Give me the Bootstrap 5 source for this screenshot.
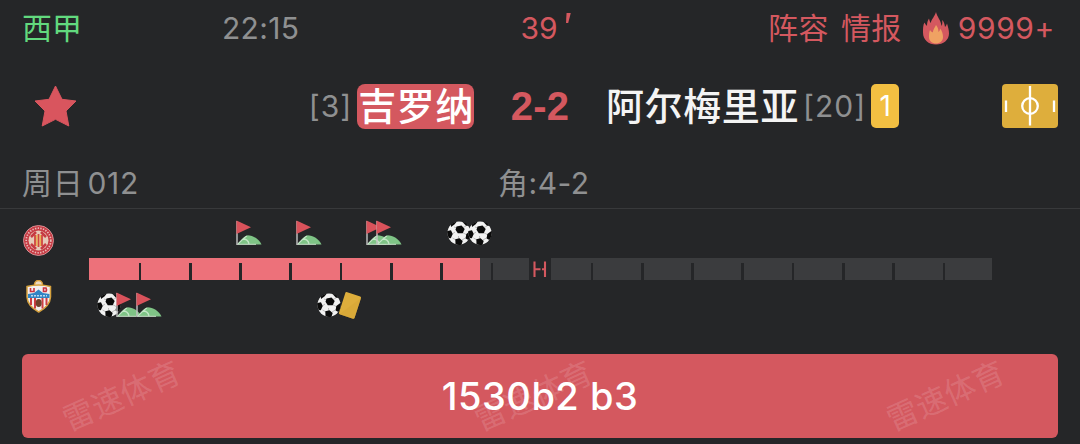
<!DOCTYPE html>
<html lang="zh-CN">
<head>
  <meta charset="UTF-8" />
  <meta name="viewport" content="width=device-width, initial-scale=1.0" />
  <title>吉罗纳 2-2 阿尔梅里亚</title>
  <link rel="stylesheet" href="https://cdn.jsdelivr.net/npm/bootstrap@5.3.3/dist/css/bootstrap.min.css" />
  <style>
    :root {
      --rojo: #d4585f;
      --gris: #8f9091;
      --fondo: #252628;
    }
    body {
      font-family: Inter, "Noto Sans CJK SC", sans-serif;
      font-size: 30px;
      font-weight: 370;
      line-height: 1;
      color: var(--gris);
      background-color: var(--fondo);
      overflow: hidden;
    }
    .match { width: 1080px; height: 444px; }
    .rojo { color: var(--rojo); }

    /* top line: league, kickoff, minute, links */
    .info-line { height: 56px; padding: 0 25px 0 22px; }
    .league { width: 200px; color: #62d97e; }
    .kickoff { width: 298.5px; letter-spacing: .3px; }
    .links { letter-spacing: .4px; }
    .heat { letter-spacing: .6px; margin-left: 9px; }
    .gap-links { margin-left: 12px; }
    .flame { margin-left: 21px; }

    /* teams and score */
    .teams-line { height: 100px; padding: 0 22px 0 34px; }
    .home-side { width: 397px; }
    .rank { letter-spacing: 1px; }
    .team-name { font-size: 38px; font-weight: 500; color: #f4f4f4; letter-spacing: .6px; }
    .home-name { height: 45px; border-radius: 8px; background: var(--rojo); color: #fff; padding: 0 0 0 1px; margin-left: 5px; }
    .score { width: 132px; font: bold 40px "Liberation Sans", sans-serif; letter-spacing: .3px; }
    .yellow-count { width: 28px; height: 44px; border-radius: 5px; background: #f2bf42; color: #fff; font-size: 28px; font-weight: 400; margin-left: 5px; }

    .extra-line { height: 53px; padding: 2px 22px 0; border-bottom: 1px solid #38393b; }
    .match-no { width: 476px; letter-spacing: .7px; }
    .corners { letter-spacing: .5px; }

    /* timeline */
    .timeline { height: 145px; }
    .crests { width: 88.5px; padding: 16px 0 0 23px; }
    .track { width: 903px; }
    .events { position: relative; height: 49px; }
    .events svg { position: absolute; }
    .half { position: relative; width: 440px; height: 22px; background: #3b3c3e; }
    .half.second { width: 441px; }
    .elapsed { height: 100%; background: #ed717a; }
    .half::after {
      content: "";
      position: absolute;
      inset: 5px 0 0 0;
      background: repeating-linear-gradient(90deg, transparent 0 47.6px, var(--fondo) 47.6px 50.3px);
      background-position: 2px 0;
      background-repeat: no-repeat;
    }
    .half.second::after { background-position: -8px 0; background-size: 460px 100%; }

    .tip-btn {
      --bs-btn-bg: #d4585f;
      --bs-btn-color: #fff;
      --bs-btn-hover-bg: #c94f56;
      --bs-btn-hover-color: #fff;
      position: relative;
      width: 1036px;
      height: 84px;
      border: 0;
      border-radius: 6px;
      font-size: 38px;
      font-weight: 480;
      letter-spacing: .5px;
      line-height: 85px;
      padding: 0;
    }
    .wm {
      position: absolute;
      top: 26px;
      font-size: 31px;
      font-weight: 400;
      letter-spacing: .3px;
      line-height: 31px;
      color: rgba(255, 255, 255, .14);
      transform: rotate(-24deg);
    }
  </style>
</head>
<body>

  <svg class="d-none">
    <symbol id="ic-flag" viewBox="0 0 26 26">
      <path d="M2 24.5C4 21 7 17 11.500 15.200C17 15.200 23 19 25.500 24.500Z" fill="#7fc486" />
      <path d="M2 24C6 20 8 17.500 11 16M7 19q5 0 6 5" fill="none" stroke="#c5e6c8" stroke-width="1.300" />
      <path d="M1 24.300H20" stroke="#c8ddc9" stroke-width="1" />
      <path d="M1 1V25" stroke="#c6c6c6" stroke-width="1.400" />
      <path d="M.5 .5L15 7.200L.5 14Z" fill="#d9525b" />
    </symbol>
    <symbol id="ic-ball" viewBox="0 0 24 24">
      <circle cx="12" cy="12" r="11.500" fill="#f2f2f2" />
      <path d="M13 8L19 5M13 8L7 6M15.500 11.500L20 14M11.500 15L12 20M8 11L4 14M5.500 17L9 19M15 19L20 16" stroke="#999" stroke-width=".6" fill="none" />
      <path d="M9.500 5.500L14.500 4.500L17.700 8L15.700 12.300L10.800 12.200L8.500 8.800Z" fill="#0b0b0b" />
      <path d="M.3 10L4 9.300L5.700 13L3.800 17.300L1.700 17A12 12 0 0 1 .3 10Z" fill="#0b0b0b" />
      <path d="M8.300 18.300L12.500 17.200L15.700 20L14.500 23.700A12 12 0 0 1 8.500 23.300Z" fill="#0b0b0b" />
      <path d="M19.300 13L23.700 9.800A12 12 0 0 1 21.300 19L18.600 17.500Z" fill="#0b0b0b" />
      <path d="M3.800 3.500A12 12 0 0 1 9.800 .4L7.700 3.200L4 6Z" fill="#0b0b0b" />
      <path d="M15 .6A12 12 0 0 1 21.500 4.800L19 4.800Z" fill="#0b0b0b" />
    </symbol>
    <symbol id="ic-card" viewBox="0 0 24 29">
      <path d="M8.500 1L22.300 5.500Q23.300 6 23 7L16.500 27Q16 28 15 27.700L1.600 23.200Q.7 22.800 1 21.800L7.400 1.800Q7.700 .8 8.500 1Z" fill="#deae3c" />
      <path d="M23 7L16.500 27Q16 28 15 27.700L1.600 23.200Z" fill="#d6a535" opacity=".6" />
    </symbol>
  </svg>

  <div class="match d-flex flex-column">
    <div class="info-line d-flex align-items-center">
      <div class="league">西甲</div>
      <div class="kickoff">22:15</div>
      <div class="rojo d-flex">39<svg width="15" height="30" viewBox="0 0 15 30"><path d="M8.600 -1H13L10.200 10H8Z" fill="#d4585f" /></svg></div>
      <div class="links rojo ms-auto d-flex align-items-center">
        <span>阵容</span>
        <span class="gap-links">情报</span>
        <svg class="flame" width="26" height="33" viewBox="0 0 26 33">
          <path d="M13 0C14 5 18 8 18.500 14C19.500 12.500 19.500 10 19 8C21 9.500 21.500 12 22 15C23 14 23.500 13 24 11.500C25 15 26 18 26 21.500C26 28 20.500 32.500 13 32.500S0 28 0 20.500C0 16.500 0 13 1.500 10.500C2.500 12.500 3.200 13 4 14C4 11 4.500 9 6 6.500C6.500 8.500 7 10 7.800 11C8.500 7 11.500 5 13 0Z" fill="#d4585f" />
          <path d="M13 13C14.500 15 15.500 16.500 15.500 20C16.500 19 17 18 17 16.500C19 18.500 20 22 20 25C20 29 17 31.500 13 31.500S6 29 6 25C6 22.500 6 20.500 7 18C8 19.500 9 20 9.800 20.500C10 17.500 12 15.500 13 13Z" fill="#efa263" />
        </svg>
        <span class="heat">9999+</span>
      </div>
    </div>

    <div class="teams-line d-flex align-items-center">
      <svg width="43" height="42" viewBox="0 0 43 42"><path d="M21.500 1L28 14.300L42 16L32 26L34.800 41L21.500 34.300L8.200 41L11 26L1 16L15 14.300Z" fill="#d9555e" stroke="#d9555e" stroke-linejoin="round" /></svg>
      <div class="home-side d-flex align-items-center justify-content-end">
        <span class="rank">[3]</span>
        <span class="team-name home-name d-flex align-items-center">吉罗纳</span>
      </div>
      <div class="score rojo text-center">2-2</div>
      <span class="team-name">阿尔梅里亚</span>
      <span class="rank ms-1">[20]</span>
      <span class="yellow-count d-flex align-items-center justify-content-center">1</span>
      <svg class="ms-auto" width="56" height="44" viewBox="0 0 56 44">
        <rect width="56" height="44" rx="4" fill="#deae3c" />
        <g fill="none" stroke="#fff" stroke-width="2.300">
          <path d="M28 2V41.500M4 16.500V28M52 16.500V28" />
          <circle cx="28" cy="22" r="7.800" />
        </g>
      </svg>
    </div>

    <div class="extra-line d-flex align-items-center">
      <div class="match-no">周日<span class="ms-1">012</span></div>
      <div class="corners">角:4-2</div>
    </div>

    <div class="timeline d-flex">
      <div class="crests d-flex flex-column">
        <svg width="31" height="31" viewBox="0 0 31 31">
          <circle cx="15.500" cy="15.500" r="15" fill="#c63a43" stroke="#e5a6a9" stroke-width=".8" />
          <circle cx="15.500" cy="15.500" r="12.300" fill="none" stroke="#e9b9b8" stroke-width="1.700" stroke-dasharray="1.400 1.300" />
          <circle cx="15.500" cy="15.500" r="10" fill="#e6c9b8" />
          <path d="M8 12L13 7M18 7L23 12M8 19L13 24M18 24L23 19" stroke="#c63a43" stroke-width="2.500" />
          <path d="M12 10V21M15.500 9V22M19 10V21" stroke="#d0453f" stroke-width="1.800" />
          <path d="M13.800 10V21M17.300 10V21" stroke="#e8ae45" stroke-width="1.200" />
        </svg>
        <svg class="mt-4" width="31" height="33" viewBox="0 0 31 33">
          <circle cx="15.500" cy="4.500" r="4" fill="#ecd9c0" stroke="#d69b36" stroke-width="1.500" />
          <path d="M4 6.500Q15.500 3.500 27.500 6.500V17Q27 26 15.700 32Q4.500 26 4 17Z" fill="#f4eeee" stroke="#d5a13e" stroke-width="1.500" />
          <path d="M8 18V25M12 18V28.500M19.500 18V28.500M23.500 18V25" stroke="#ce3f43" stroke-width="2" />
          <path d="M7.500 8V11.500H11V8M20.500 8V11.500H23Q24 9.800 23 8Z" fill="none" stroke="#cc3340" stroke-width="1.600" />
          <path d="M11 13L15.500 9.500L20 13L26.500 14V18H5V14Z" fill="#3184c4" />
          <path d="M8 15.800H24" stroke="#b9d9ee" stroke-width="1.500" stroke-dasharray="2 1" />
          <ellipse cx="15.700" cy="23" rx="3" ry="4" fill="#70422d" />
        </svg>
      </div>
      <div class="track">
        <div class="events" id="home-events"></div>
        <div class="d-flex">
          <div class="half"><div class="elapsed" id="elapsed"></div></div>
          <svg width="22" height="22" viewBox="0 0 22 22"><path d="M5.500 3.500V19M16 3.500V19M6 11.300H11.500M13 11.300H16" stroke="#d4585f" stroke-width="2.100" fill="none" /></svg>
          <div class="half second"></div>
        </div>
        <div class="events" id="away-events"></div>
      </div>
    </div>

    <button type="button" class="btn tip-btn mx-auto">
      <span class="wm" style="left: 37px">雷速体育</span>
      <span class="wm" style="left: 449px">雷速体育</span>
      <span class="wm" style="left: 861px">雷速体育</span>
      <span class="position-relative">1530b2 b3</span>
    </button>
  </div>

  <script src="https://cdn.jsdelivr.net/npm/bootstrap@5.3.3/dist/js/bootstrap.bundle.min.js"></script>
  <script>
    const icons = {
      flag: { w: 26, h: 26, y: 11.5 },
      ball: { w: 24, h: 24, y: 12 },
      card: { w: 24, h: 29, y: 10 }
    };

    // x = offset along the track
    const homeEvents = [
      { type: "flag", x: 147 },
      { type: "flag", x: 207 },
      { type: "flag", x: 277.5 },
      { type: "flag", x: 287.5 },
      { type: "ball", x: 358.5 },
      { type: "ball", x: 379.5 }
    ];
    const awayEvents = [
      { type: "ball", x: 8 },
      { type: "flag", x: 27 },
      { type: "flag", x: 47 },
      { type: "ball", x: 228.5 },
      { type: "card", x: 249.5 }
    ];

    function renderEvents(id, list, dy) {
      document.getElementById(id).innerHTML = list.map(ev => {
        const ic = icons[ev.type];
        return `<svg width="${ic.w}" height="${ic.h}" style="left: ${ev.x}px; top: ${ic.y + dy}px"><use href="#ic-${ev.type}"/></svg>`;
      }).join("");
    }

    renderEvents("home-events", homeEvents, -0.5);
    renderEvents("away-events", awayEvents, 0.5);
    document.getElementById("elapsed").style.width = (39 / 44 * 100 + 0.35).toFixed(2) + "%";
  </script>

</body>
</html>
